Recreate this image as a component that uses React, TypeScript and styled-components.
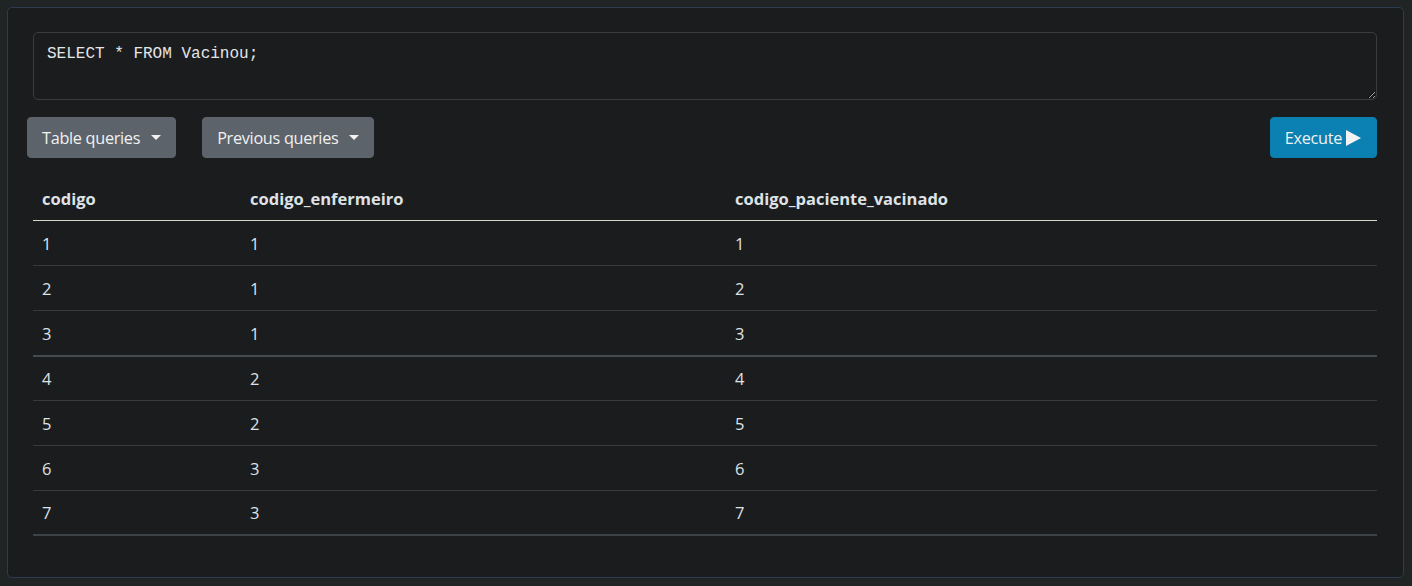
import styled, { createGlobalStyle } from 'styled-components'

const GlobalStyle = createGlobalStyle`
  html, body {
    margin: 0;
    padding: 0;
    background-color: #202425;
  }

  body {
    font-family: 'Open Sans', 'Noto Sans', sans-serif;
    color: #dee2e6;
  }
`

type Row = {
  codigo: number
  codigo_enfermeiro: number
  codigo_paciente_vacinado: number
}

const rows: Row[] = [
  { codigo: 1, codigo_enfermeiro: 1, codigo_paciente_vacinado: 1 },
  { codigo: 2, codigo_enfermeiro: 1, codigo_paciente_vacinado: 2 },
  { codigo: 3, codigo_enfermeiro: 1, codigo_paciente_vacinado: 3 },
  { codigo: 4, codigo_enfermeiro: 2, codigo_paciente_vacinado: 4 },
  { codigo: 5, codigo_enfermeiro: 2, codigo_paciente_vacinado: 5 },
  { codigo: 6, codigo_enfermeiro: 3, codigo_paciente_vacinado: 6 },
  { codigo: 7, codigo_enfermeiro: 3, codigo_paciente_vacinado: 7 },
]

const columns: { key: keyof Row; width: number }[] = [
  { key: 'codigo', width: 208 },
  { key: 'codigo_enfermeiro', width: 485 },
  { key: 'codigo_paciente_vacinado', width: 651 },
]

const App = () => {
  return (
    <>
      <GlobalStyle />
      <Page>
        <Card>
          <QueryInput defaultValue="SELECT * FROM Vacinou;" spellCheck={false} />

          <Toolbar>
            <Group>
              <Button variant="secondary">
                Table queries <Caret />
              </Button>
              <Button variant="secondary">
                Previous queries <Caret />
              </Button>
            </Group>
            <Button variant="info">
              Execute
              <svg width="17" height="18" viewBox="0 0 17 18">
                <path d="M1 1 L16 9 L1 17 Z" fill="#f3f3f3" />
              </svg>
            </Button>
          </Toolbar>

          <Table>
            <colgroup>
              {columns.map((c) => (
                <col key={c.key} style={{ width: c.width }} />
              ))}
            </colgroup>
            <thead>
              <tr>
                {columns.map((c) => (
                  <Th key={c.key}>{c.key}</Th>
                ))}
              </tr>
            </thead>
            <tbody>
              {rows.map((r, i) => {
                const thick = i === 3 || i === rows.length - 1
                return (
                  <Tr key={r.codigo} divider={i === 3} last={i === rows.length - 1}>
                    {columns.map((c) => (
                      <Td key={c.key} thick={thick}>
                        {r[c.key]}
                      </Td>
                    ))}
                  </Tr>
                )
              })}
            </tbody>
          </Table>
        </Card>
      </Page>
    </>
  )
}

const Page = styled.div`
  padding: 7px 8px 8px 7px;
  height: 586px;
  box-sizing: border-box;
`

const Card = styled.div`
  box-sizing: border-box;
  width: 1397px;
  height: 571px;
  border: 1px solid #2c3d4f;
  border-radius: 5px;
  background-color: #1b1c1e;
  padding: 24px 26px 0 19px;
  display: flex;
  flex-direction: column;
`

const QueryInput = styled.textarea`
  box-sizing: border-box;
  display: block;
  margin-left: 6px;
  width: calc(100% - 6px);
  height: 68px;
  padding: 11px 13px;
  border: 1px solid #3a3c3f;
  border-radius: 5px;
  background-color: #1b1c1e;
  color: #e4e6e8;
  font-family: 'Liberation Mono', 'DejaVu Sans Mono', monospace;
  font-size: 16px;
  line-height: 1.3;
  outline: none;
  resize: vertical;
`

const Toolbar = styled.div`
  display: flex;
  justify-content: space-between;
  align-items: center;
  margin-top: 17px;
`

const Group = styled.div`
  display: flex;
  gap: 26px;
`

const Button = styled.button<{ variant: 'secondary' | 'info' }>`
  display: inline-flex;
  align-items: center;
  gap: 3px;
  height: 41px;
  padding: 0 14px;
  border: 1px solid ${({ variant }) => (variant === 'info' ? '#0b7fb0' : '#5c636a')};
  border-radius: 4px;
  background-color: ${({ variant }) => (variant === 'info' ? '#0a80b3' : '#5c636a')};
  color: #f1f1f1;
  font-family: 'Open Sans', 'Noto Sans', sans-serif;
  font-size: 16.25px;
  letter-spacing: -0.3px;
  cursor: pointer;
`

const Caret = styled.span`
  display: inline-block;
  margin-left: 8px;
  width: 0;
  height: 0;
  border-top: 5px solid #f1f1f1;
  border-left: 5px solid transparent;
  border-right: 5px solid transparent;
`

const Table = styled.table`
  margin: 18px 0 0 6px;
  width: calc(100% - 6px);
  border-collapse: collapse;
  table-layout: fixed;
  font-size: 16.5px;
`

const Th = styled.th`
  text-align: left;
  height: 44px;
  padding: 0 9px;
  font-weight: 700;
  font-size: 16.5px;
  color: #dee2e6;
  border-bottom: 1px solid #d8d8cf;
`

const Tr = styled.tr<{ divider: boolean; last: boolean }>`
  border-top: ${({ divider }) => (divider ? '2px solid #444a4d' : 'none')};
  border-bottom: ${({ last }) => (last ? '2px solid #3c4245' : '1px solid #393a3c')};
`

const Td = styled.td<{ thick: boolean }>`
  height: ${({ thick }) => (thick ? 43 : 44)}px;
  padding: 0 9px;
  color: #dee2e6;
  font-weight: 400;
`

export default App
